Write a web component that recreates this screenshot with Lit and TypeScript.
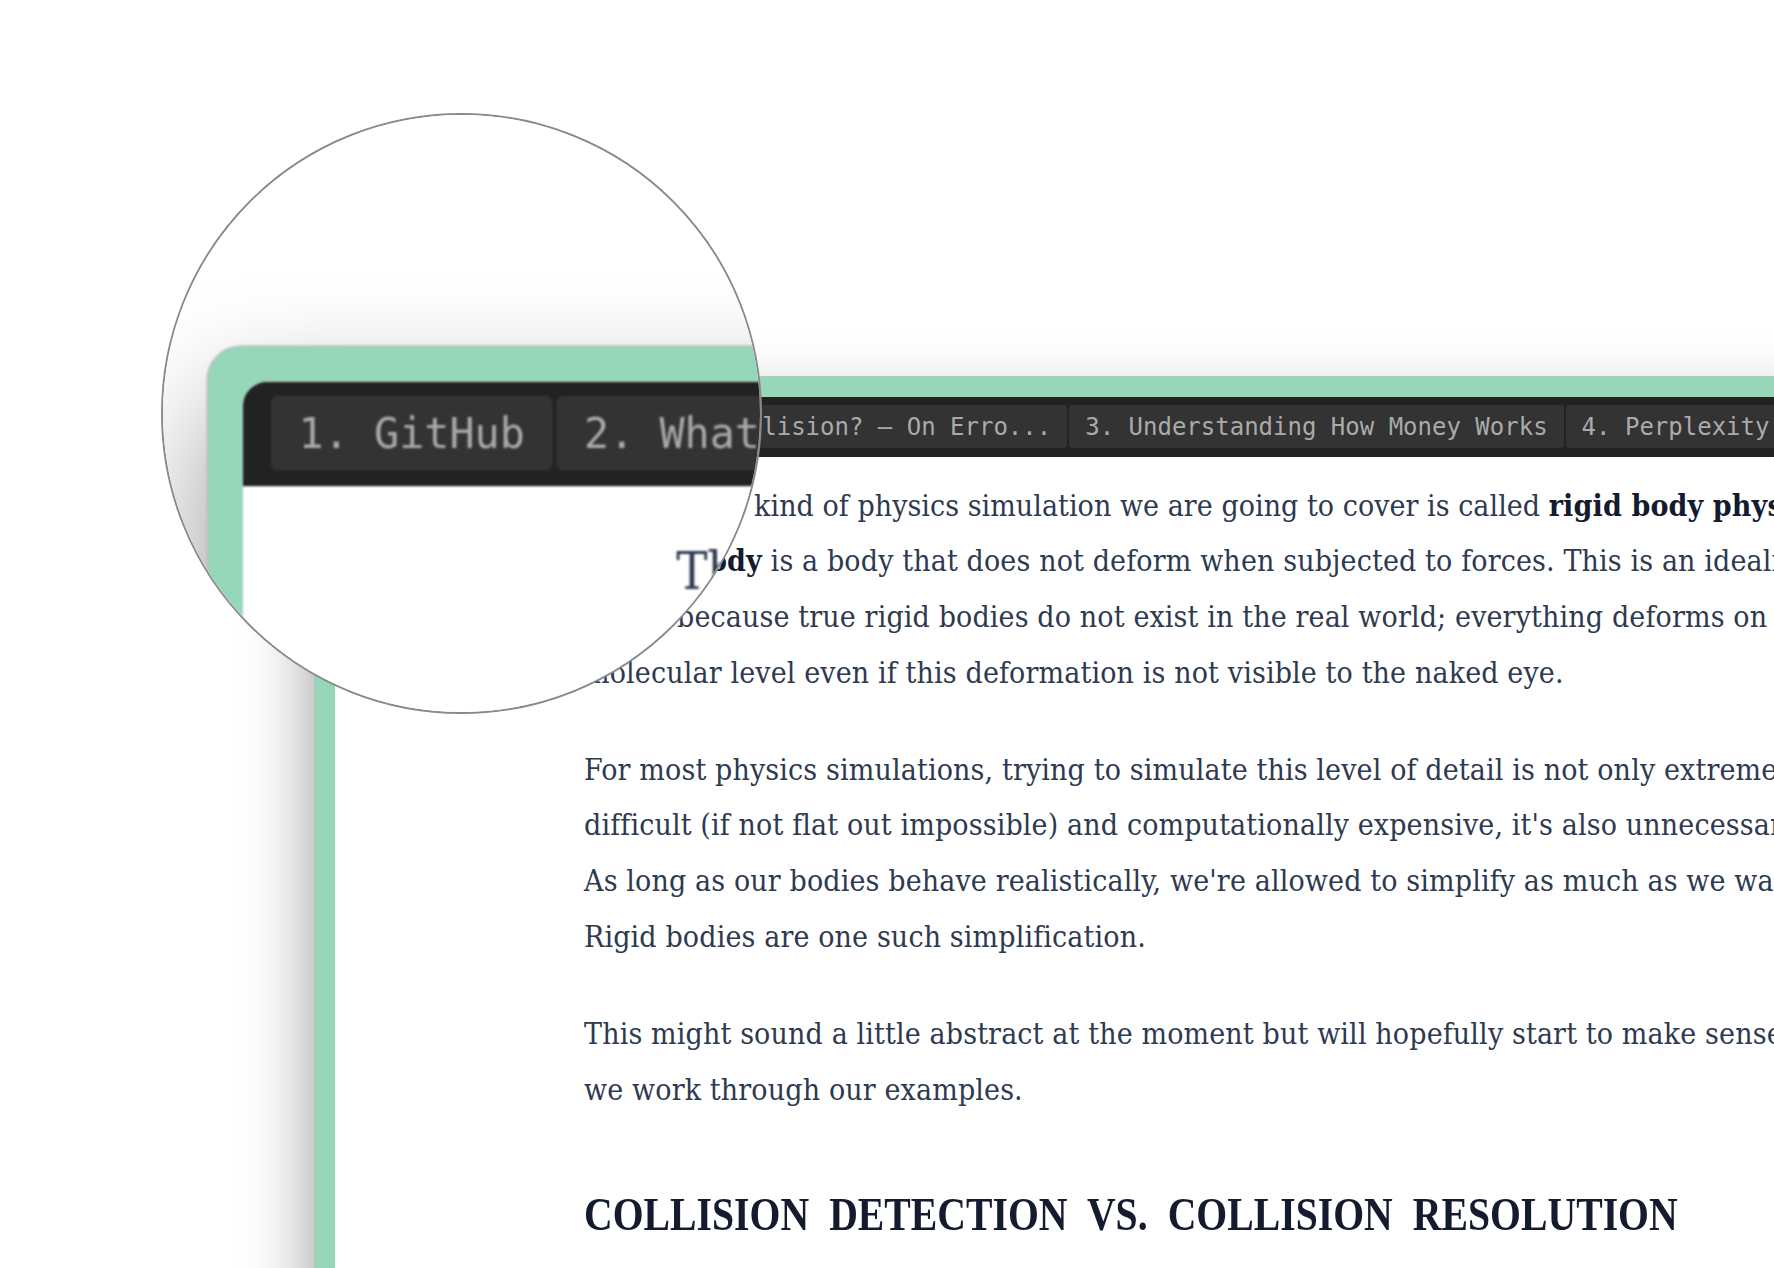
import { LitElement, html, css } from "lit";
import { customElement } from "lit/decorators.js";

const TABS = [
  "1. GitHub",
  "2. What Is a Collision? — On Erro...",
  "3. Understanding How Money Works",
  "4. Perplexity",
];

@customElement("app-root")
export class AppRoot extends LitElement {
  static styles = css`
    :host { display: block; }
    .stage { position: relative; width: 1774px; height: 1268px; overflow: hidden; background: #fff; }
    .page { width: 1774px; height: 1268px; padding: 376px 0 0 314px; box-sizing: border-box; background: #fff; overflow: hidden; }
    .window {
      width: 1700px; height: 1300px; box-sizing: border-box;
      background: #96d6b9; border: 1px solid #c0c0c0; border-radius: 20px 0 0 0; padding: 20px 0 0 20px;
      box-shadow: 0 34px 70px rgba(0,0,0,.4);
    }
    .inner { background: #fff; border-radius: 14px 0 0 0; overflow: hidden; height: 100%; }
    .tabs { display: flex; gap: 2px; background: #222; padding: 8px 0 9px 16px; height: 43px; }
    .tab {
      flex: none; height: 43px; padding: 0 16px; background: #333; color: #aaa; border-radius: 4px;
      font: 24px/44px "DejaVu Sans Mono", monospace; white-space: pre;
    }
    .article { padding: 20.5px 0 0 249px; font-family: "DejaVu Serif Condensed", "DejaVu Serif", serif; font-stretch: condensed; font-size: 30px; letter-spacing: .13px; line-height: 55.8px; color: #2d3a50; white-space: nowrap; }
    p { margin: 0 0 41px; }
    strong { color: #141b2e; }
    .lead { letter-spacing: -.25px; }
    .snug { letter-spacing: .04px; }
    .tight { word-spacing: -5px; }
    h2 { margin: 68.5px 0 0; font-family: "Liberation Serif", serif; font-stretch: normal; font-size: 47px; letter-spacing: 0; line-height: 56px; color: #141b2e; text-transform: uppercase; transform: scaleX(.845); transform-origin: 0 0; word-spacing: 12px; font-weight: 700; }
    .lens {
      position: absolute; left: 161px; top: 113px; width: 601px; height: 601px; box-sizing: border-box;
      border: 2px solid #8a8a8a; border-radius: 50%; overflow: hidden; background: #fff;
    }
    .zoomed { position: absolute; left: -502.6px; top: -423.7px; transform: scale(1.74); transform-origin: 0 0; filter: blur(.5px); }
  `;

  private content() {
    return html`<div class="page">
      <div class="window">
        <div class="inner">
          <div class="tabs">${TABS.map((t) => html`<div class="tab">${t}</div>`)}</div>
          <div class="article">
            <p><span class="lead">The specific</span><span class="snug"> kind of physics simulation we are going to cover is called </span><strong>rigid body physics</strong>.<br />
            <span class="tight">A </span><strong>rigid body</strong> is a body that does not deform when subjected to forces. This is an idealized<br />
            model because true rigid bodies do not exist in the real world; everything deforms on the<br />
            molecular level even if this deformation is not visible to the naked eye.</p>
            <p>For most physics simulations, trying to simulate this level of detail is not only extremely<br />
            difficult (if not flat out impossible) and computationally expensive, it's also unnecessary.<br />
            As long as our bodies behave realistically, we're allowed to simplify as much as we want.<br />
            Rigid bodies are one such simplification.</p>
            <p>This might sound a little abstract at the moment but will hopefully start to make sense as<br />
            we work through our examples.</p>
            <h2>Collision Detection vs. Collision Resolution</h2>
          </div>
        </div>
      </div>
    </div>`;
  }

  render() {
    return html`<div class="stage">
      ${this.content()}
      <div class="lens"><div class="zoomed">${this.content()}</div></div>
    </div>`;
  }
}
